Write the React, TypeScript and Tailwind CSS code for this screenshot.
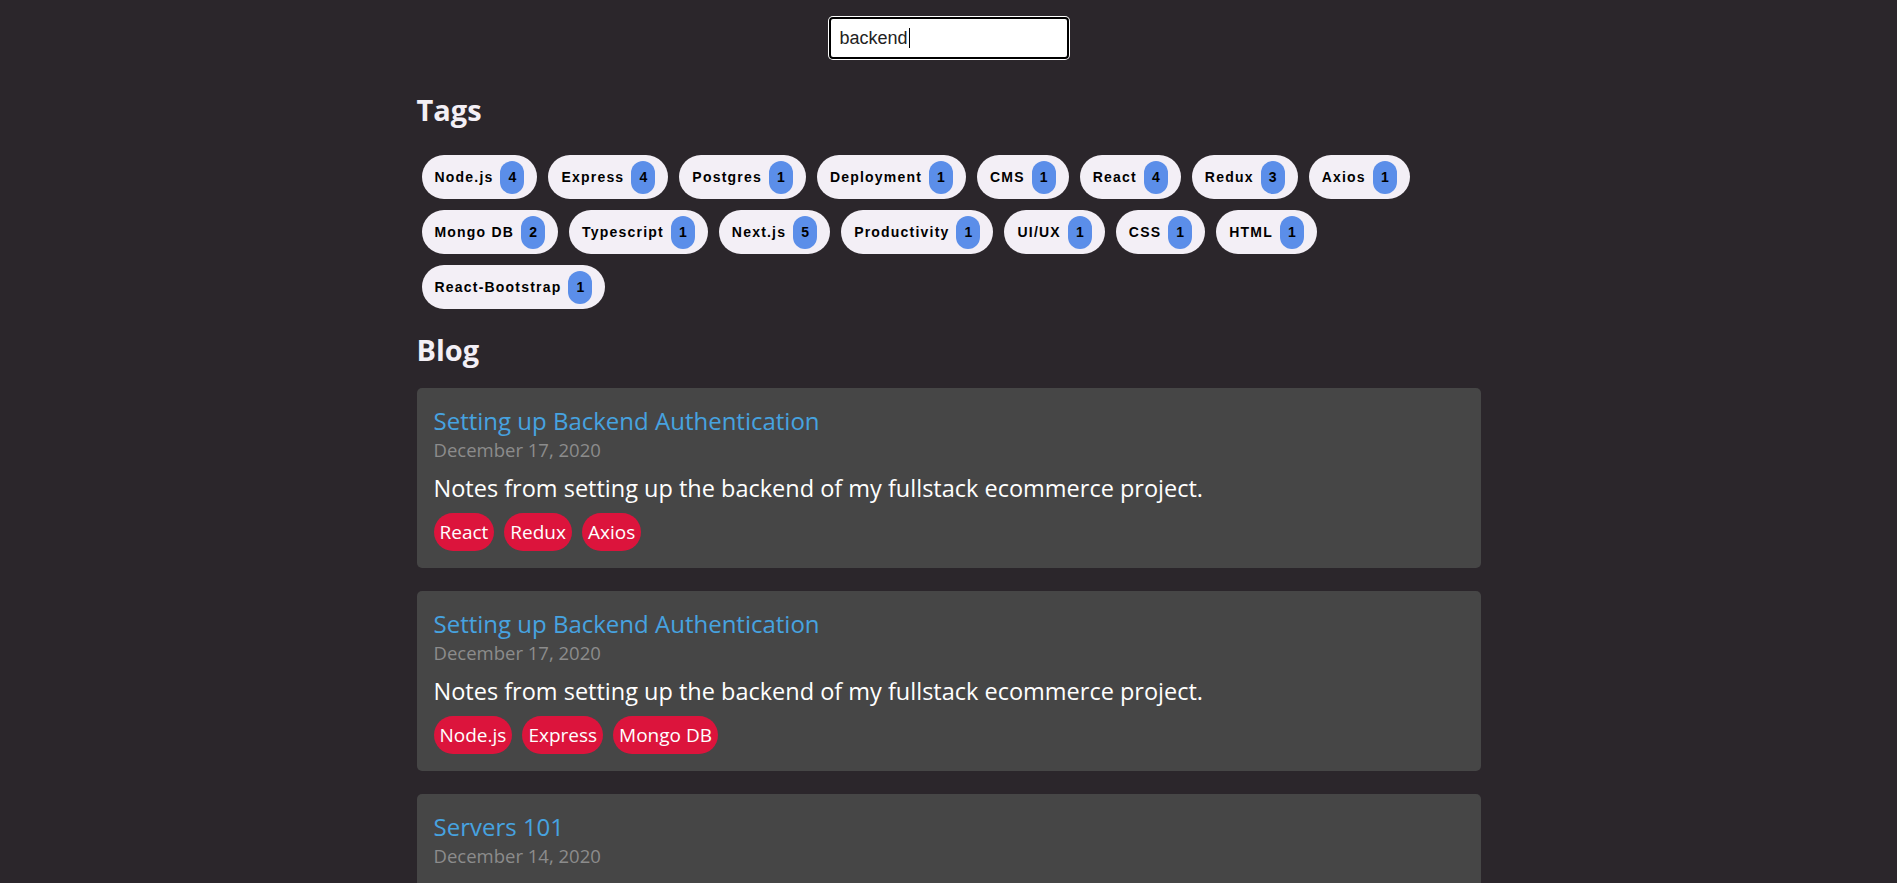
import React from "react";

const rows: [string, number][][] = [
  [
    ["Node.js", 4],
    ["Express", 4],
    ["Postgres", 1],
    ["Deployment", 1],
    ["CMS", 1],
    ["React", 4],
    ["Redux", 3],
    ["Axios", 1],
  ],
  [
    ["Mongo DB", 2],
    ["Typescript", 1],
    ["Next.js", 5],
    ["Productivity", 1],
    ["UI/UX", 1],
    ["CSS", 1],
    ["HTML", 1],
  ],
  [["React-Bootstrap", 1]],
];

const posts = [
  {
    title: "Setting up Backend Authentication",
    date: "December 17, 2020",
    desc: "Notes from setting up the backend of my fullstack ecommerce project.",
    tags: ["React", "Redux", "Axios"],
  },
  {
    title: "Setting up Backend Authentication",
    date: "December 17, 2020",
    desc: "Notes from setting up the backend of my fullstack ecommerce project.",
    tags: ["Node.js", "Express", "Mongo DB"],
  },
  {
    title: "Servers 101",
    date: "December 14, 2020",
    desc: "A short overview of how servers work and how to deploy one.",
    tags: ["Node.js", "Deployment"],
  },
];

const mont = { fontFamily: '"Open Sans", "DejaVu Sans", sans-serif' };

function TagPill({ name, count }: { name: string; count: number }) {
  return (
    <div className="flex h-[44px] items-center rounded-full bg-[#f3eff6] pl-[13px] pr-[13px] font-['Liberation_Sans',Arial,sans-serif] text-[14px] font-bold tracking-[1.2px] text-black">
      <span>{name}</span>
      <span className="ml-[7px] flex h-[33px] w-[24px] items-center justify-center rounded-full bg-[#5b8ee9] tracking-normal">
        {count}
      </span>
    </div>
  );
}

function Card({ p }: { p: (typeof posts)[number] }) {
  return (
    <div className="rounded-[5px] bg-[#464646] px-[17px] pb-[17px] pt-[18px]" style={mont}>
      <div className="text-[24px] leading-[30px] text-[#46a3e0]">{p.title}</div>
      <div className="mt-[2px] text-[18.5px] leading-[24px] text-[#8c8c8c]">{p.date}</div>
      <div className="mt-[10px] text-[23.5px] leading-[32px] text-white">{p.desc}</div>
      <div className="mt-[9px] flex gap-[10px]">
        {p.tags.map((t) => (
          <span
            key={t}
            className="flex h-[38px] items-center rounded-full bg-[#dc143c] px-[6px] text-[19px] text-white"
          >
            {t}
          </span>
        ))}
      </div>
    </div>
  );
}

export default function App() {
  return (
    <div className="min-h-screen bg-[#2b262b]">
      <div className="flex justify-center pt-[17px]">
        <div className="flex h-[42px] w-[240px] items-center rounded-[4px] border-2 border-black bg-white pl-[9px] font-['Liberation_Sans',Arial,sans-serif] text-[18px] text-[#222] shadow-[0_0_0_1px_#ffffff]">
          <span>backend</span>
          <span className="ml-[1px] inline-block h-[20px] w-[1px] bg-black" />
        </div>
      </div>
      <div className="mx-auto w-[1064px]">
        <h2 className="mt-[34px] text-[29px] font-bold leading-[34px] text-[#f3eff6]" style={mont}>
          Tags
        </h2>
        <div className="mt-[28px] flex flex-col gap-[11px] pl-[5px]">
          {rows.map((r, i) => (
            <div key={i} className="flex gap-[11px]">
              {r.map(([n, c]) => (
                <TagPill key={n} name={n} count={c} />
              ))}
            </div>
          ))}
        </div>
        <h2 className="mt-[24px] text-[29px] font-bold leading-[34px] text-[#f3eff6]" style={mont}>
          Blog
        </h2>
        <div className="mt-[21px] flex flex-col gap-[23px] pb-[40px]">
          {posts.map((p, i) => (
            <Card key={i} p={p} />
          ))}
        </div>
      </div>
    </div>
  );
}
